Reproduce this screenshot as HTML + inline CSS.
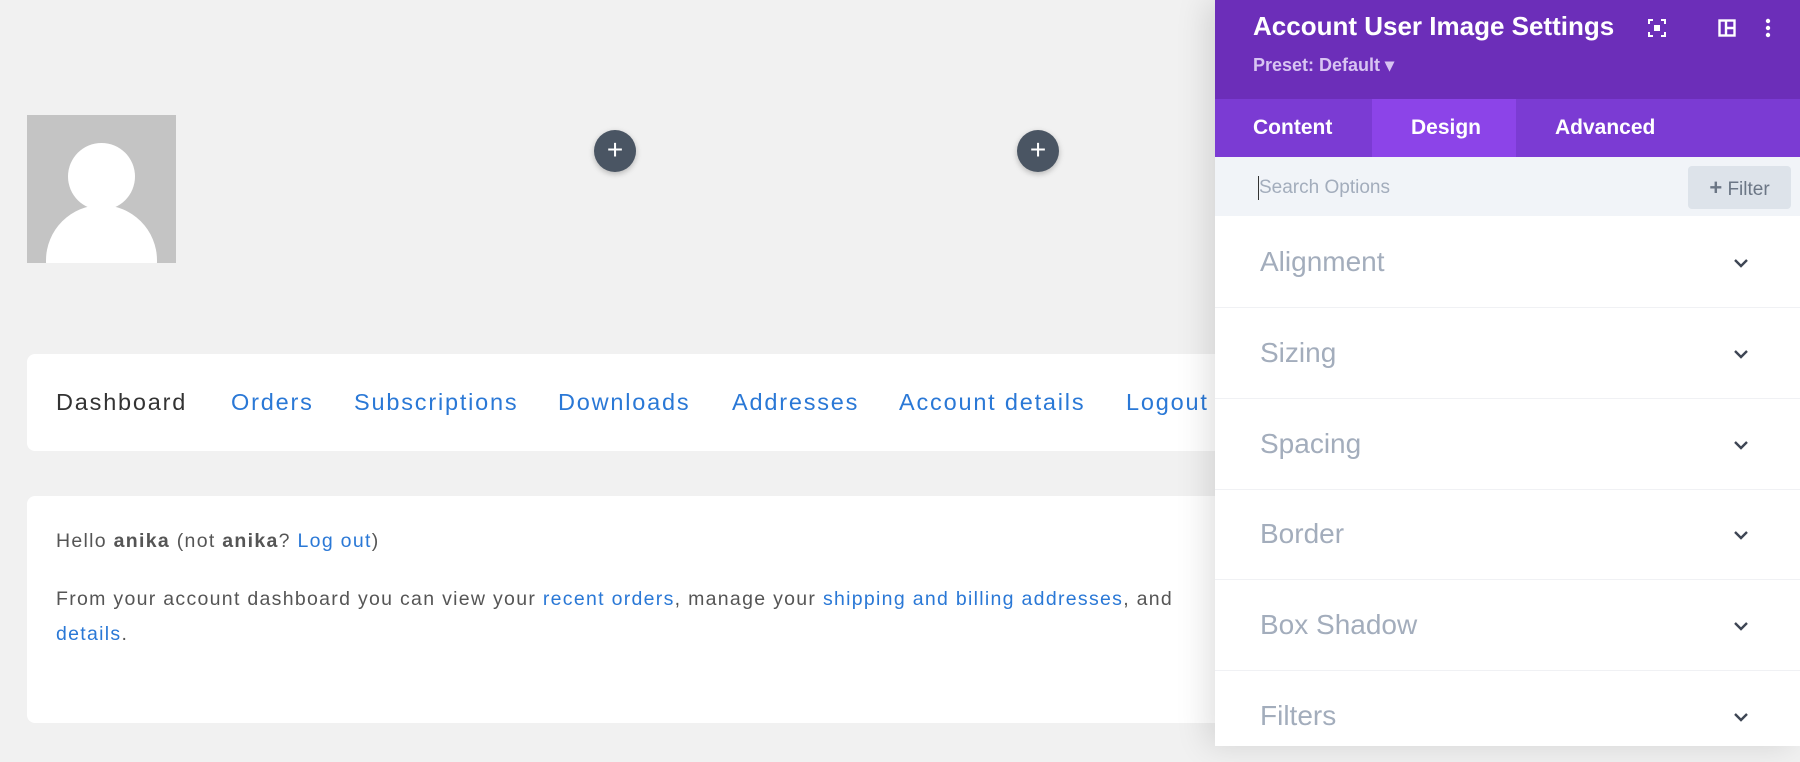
<!DOCTYPE html>
<html><head><meta charset="utf-8"><style>
*{margin:0;padding:0;box-sizing:border-box}
body{width:1800px;height:746px;overflow:hidden;background:#f1f1f1;font-family:"Liberation Sans",sans-serif;position:relative}
.abs{position:absolute}
.plus{width:42px;height:42px;border-radius:50%;background:#4a5563;color:#fff;font-size:28px;line-height:40px;text-align:center;box-shadow:0 2px 6px rgba(0,0,0,.25)}
.card{background:#fff;border-radius:8px;left:27px;width:1250px}
.nav span{position:absolute;top:35px;font-size:23.5px;letter-spacing:1.8px;color:#2a78d6;white-space:nowrap}
.txt{font-size:19.5px;letter-spacing:1.3px;color:#555}
.txt a{color:#2a78d6;text-decoration:none}
.panel{left:1215px;top:0;width:585px;height:746px;background:#fff;box-shadow:-8px 0 30px rgba(0,0,0,.12)}
.row{position:absolute;left:0;width:585px;height:91px;border-bottom:1px solid #f0f1f4}
.row span{position:absolute;left:45px;top:29px;font-size:28px;color:#a3adbc}
.row svg{position:absolute;left:518px;top:41px}
</style></head><body>
<div class="abs" style="left:27px;top:115px;width:149px;height:148px;background:#c4c4c4;overflow:hidden">
<div class="abs" style="left:41px;top:28px;width:67px;height:67px;border-radius:50%;background:#fff"></div>
<div class="abs" style="left:19px;top:90px;width:111px;height:111px;border-radius:50%;background:#fff"></div>
</div>
<div class="abs plus" style="left:594px;top:130px">+</div>
<div class="abs plus" style="left:1017px;top:130px">+</div>
<div class="abs card nav" style="top:354px;height:97px">
<span style="left:29px;color:#333">Dashboard</span>
<span style="left:204px">Orders</span>
<span style="left:327px">Subscriptions</span>
<span style="left:531px">Downloads</span>
<span style="left:705px">Addresses</span>
<span style="left:872px">Account details</span>
<span style="left:1099px">Logout</span>
</div>
<div class="abs card txt" style="top:496px;height:227px;overflow:hidden">
<div class="abs" style="left:29px;top:34px;white-space:nowrap">Hello <b>anika</b> (not <b>anika</b>? <a>Log out</a>)</div>
<div class="abs" style="left:29px;top:92px;white-space:nowrap">From your account dashboard you can view your <a>recent orders</a>, manage your <a>shipping and billing addresses</a>, and</div>
<div class="abs" style="left:29px;top:127px"><a>details</a>.</div>
</div>
<div class="abs panel">
<div class="abs" style="left:0;top:0;width:585px;height:99px;background:#6c2eb9"></div>
<div class="abs" style="left:38px;top:11px;font-size:26px;font-weight:bold;color:#fff;white-space:nowrap">Account User Image Settings</div>
<div class="abs" style="left:38px;top:55px;font-size:18px;color:#d8c4f2;font-weight:bold">Preset: Default ▾</div>
<svg class="abs" style="left:433px;top:19px" width="18" height="18" viewBox="0 0 18 18" fill="none" stroke="#fff" stroke-width="2"><path d="M1 5V1h4M13 1h4v4M17 13v4h-4M5 17H1v-4"/><rect x="6" y="6" width="6" height="6" fill="#fff" stroke="none"/></svg>
<svg class="abs" style="left:503px;top:19px" width="18" height="18" viewBox="0 0 18 18" fill="none" stroke="#fff" stroke-width="2.4"><rect x="1.5" y="1.5" width="15" height="15"/><path d="M8 1v16M8 9h8"/></svg>
<svg class="abs" style="left:550px;top:18px" width="6" height="20" viewBox="0 0 6 20" fill="#fff"><circle cx="3" cy="3" r="2.2"/><circle cx="3" cy="10" r="2.2"/><circle cx="3" cy="17" r="2.2"/></svg>
<div class="abs" style="left:0;top:99px;width:585px;height:58px;background:#7b3bd3"></div>
<div class="abs" style="left:157px;top:99px;width:144px;height:58px;background:#8c44e8"></div>
<div class="abs" style="left:38px;top:116px;font-size:21px;color:#fff;font-weight:bold">Content</div>
<div class="abs" style="left:196px;top:116px;font-size:21px;color:#fff;font-weight:bold">Design</div>
<div class="abs" style="left:340px;top:116px;font-size:21px;color:#fff;font-weight:bold">Advanced</div>
<div class="abs" style="left:0;top:157px;width:585px;height:59px;background:#f1f4f8"></div>
<div class="abs" style="left:43px;top:176px;width:1px;height:24px;background:#333"></div>
<div class="abs" style="left:44px;top:177px;font-size:19px;color:#a3adbc">Search Options</div>
<div class="abs" style="left:473px;top:166px;width:103px;height:43px;background:#dde3ea;border-radius:4px;font-size:19px;color:#6b7685;line-height:43px;text-align:center"><b style="font-size:22px">+</b> Filter</div>
<div class="row" style="top:217px"><span>Alignment</span><svg width="16" height="10" viewBox="0 0 16 10"><path d="M2 2l6 6 6-6" fill="none" stroke="#3e4654" stroke-width="2.4"/></svg></div>
<div class="row" style="top:308px"><span>Sizing</span><svg width="16" height="10" viewBox="0 0 16 10"><path d="M2 2l6 6 6-6" fill="none" stroke="#3e4654" stroke-width="2.4"/></svg></div>
<div class="row" style="top:399px"><span>Spacing</span><svg width="16" height="10" viewBox="0 0 16 10"><path d="M2 2l6 6 6-6" fill="none" stroke="#3e4654" stroke-width="2.4"/></svg></div>
<div class="row" style="top:489px"><span>Border</span><svg width="16" height="10" viewBox="0 0 16 10"><path d="M2 2l6 6 6-6" fill="none" stroke="#3e4654" stroke-width="2.4"/></svg></div>
<div class="row" style="top:580px"><span>Box Shadow</span><svg width="16" height="10" viewBox="0 0 16 10"><path d="M2 2l6 6 6-6" fill="none" stroke="#3e4654" stroke-width="2.4"/></svg></div>
<div class="row" style="top:671px;border:none"><span>Filters</span><svg width="16" height="10" viewBox="0 0 16 10"><path d="M2 2l6 6 6-6" fill="none" stroke="#3e4654" stroke-width="2.4"/></svg></div>
</div>
</body></html>
